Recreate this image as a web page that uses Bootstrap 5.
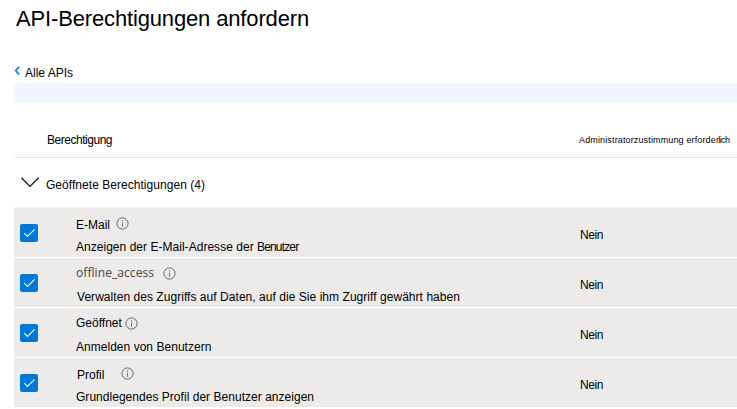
<!DOCTYPE html>
<html lang="de">
<head>
<meta charset="utf-8">
<meta name="viewport" content="width=device-width, initial-scale=1">
<title>API-Berechtigungen anfordern</title>
<link href="https://cdn.jsdelivr.net/npm/bootstrap@5.3.0/dist/css/bootstrap.min.css" rel="stylesheet">
<style>
body{font-family:"Liberation Sans",Arial,sans-serif;font-size:12px;line-height:14px;color:#000;overflow:hidden}
svg{display:block;flex:none}
.page{padding-left:14px;height:409px}
.page-title{font-size:22px;line-height:26px;letter-spacing:-.15px;padding:6px 0 0 2px;height:65px;font-weight:400}
.back-link{height:18px;padding-top:1px;color:#000}
.back-link svg{margin-right:4px}
.info-bar{height:20px;background:#eff6ff}
.perm-head{height:55px;border-bottom:1px solid #e9e9e9;padding-top:30px}
.col-perm{padding-left:33px;letter-spacing:-.47px}
.col-admin{width:158px;font-size:9px;letter-spacing:.14px}
.tight{letter-spacing:-.6px}
.group-toggle{height:49px;padding:20px 0 0 7px}
.group-toggle svg{margin-top:-1px}
.group-toggle span{padding-left:6px;letter-spacing:.04px}
.perm-row{height:50px;border-top:1px solid #fff;background:#ecebe9;background-clip:padding-box}
.perm-row:first-child{border-top-color:#f4f3f2}
.check-cell{width:62px;padding:16px 0 0 6px}
.check-box{width:18px;height:18px;border-radius:2px;background:#0078d7}
.name-line{height:22px;padding-top:9px}
.perm-name{padding-top:1px}
.perm-name.up{padding-top:0;margin-top:-1px}
.perm-name.in{padding-left:1px}
.perm-name.alt{font-family:"Open Sans","Noto Sans",sans-serif;color:#444;letter-spacing:.07px;margin-top:-2px}
.perm-desc{padding-top:10px;letter-spacing:.03px}
.perm-desc.in{padding-left:1px;letter-spacing:.045px}
.perm-desc .squeeze{letter-spacing:-.85px}
.admin-cell{width:157px;padding-top:20px;letter-spacing:-.45px}
.gap-a{margin-left:6px}.gap-b{margin-left:9px}.gap-c{margin-left:3px}.gap-d{margin-left:17px}
</style>
<script src="https://cdn.jsdelivr.net/npm/bootstrap@5.3.0/dist/js/bootstrap.bundle.min.js"></script>
</head>
<body>
<svg width="0" height="0" class="position-absolute">
<symbol id="info" viewBox="0 0 13 13"><circle cx="6.5" cy="6.5" r="5.6" fill="none" stroke="#666" stroke-width="1"/><path d="M6.5 5.5V9.7M6.5 3.3V4.5" stroke="#777" stroke-width="1.1" fill="none"/></symbol>
<symbol id="tick" viewBox="0 0 18 18"><path d="M4.2 9.2L7.5 12.5L14.6 5.4" fill="none" stroke="#fff" stroke-width="1.1"/></symbol>
</svg>
<main class="page">
<h1 class="page-title mb-0">API-Berechtigungen anfordern</h1>
<a href="#" class="back-link d-flex text-decoration-none"><svg width="7" height="11" viewBox="0 0 7 11"><path d="M5.2 .6L1.6 4.6L5.2 8.6" fill="none" stroke="#1a7fd6" stroke-width="1.6"/></svg><span>Alle APIs</span></a>
<div class="info-bar"></div>
<div class="perm-head d-flex">
<div class="col-perm flex-grow-1">Berechtigung</div>
<div class="col-admin text-nowrap">Administratorzustimmung erforde<span class="tight">rlich</span></div>
</div>
<div class="group-toggle d-flex"><svg width="19" height="13" viewBox="0 0 19 13"><path d="M.4 .8L9 9.4L17.6 .8" fill="none" stroke="#111" stroke-width="1.3"/></svg><span>Geöffnete Berechtigungen (4)</span></div>
<section>
<div class="perm-row d-flex">
<div class="check-cell"><div class="check-box"><svg width="18" height="18"><use href="#tick"/></svg></div></div>
<div class="flex-grow-1"><div class="name-line d-flex"><span class="perm-name">E-Mail</span><svg class="gap-a" width="13" height="13"><use href="#info"/></svg></div><div class="perm-desc">Anzeigen der E-Mail-Adresse der <span class="squeeze">Benutzer</span></div></div>
<div class="admin-cell">Nein</div>
</div>
<div class="perm-row d-flex">
<div class="check-cell"><div class="check-box"><svg width="18" height="18"><use href="#tick"/></svg></div></div>
<div class="flex-grow-1"><div class="name-line d-flex"><span class="perm-name alt">offline_access</span><svg class="gap-b" width="13" height="13"><use href="#info"/></svg></div><div class="perm-desc in">Verwalten des Zugriffs auf Daten, auf die Sie ihm Zugriff gewährt haben</div></div>
<div class="admin-cell">Nein</div>
</div>
<div class="perm-row d-flex">
<div class="check-cell"><div class="check-box"><svg width="18" height="18"><use href="#tick"/></svg></div></div>
<div class="flex-grow-1"><div class="name-line d-flex"><span class="perm-name up">Geöffnet</span><svg class="gap-c" width="13" height="13"><use href="#info"/></svg></div><div class="perm-desc">Anmelden von Benutzern</div></div>
<div class="admin-cell">Nein</div>
</div>
<div class="perm-row d-flex">
<div class="check-cell"><div class="check-box"><svg width="18" height="18"><use href="#tick"/></svg></div></div>
<div class="flex-grow-1"><div class="name-line d-flex"><span class="perm-name in">Profil</span><svg class="gap-d" width="13" height="13"><use href="#info"/></svg></div><div class="perm-desc">Grundlegendes Profil der Benutzer anzeigen</div></div>
<div class="admin-cell">Nein</div>
</div>
</section>
</main>
</body>
</html>
